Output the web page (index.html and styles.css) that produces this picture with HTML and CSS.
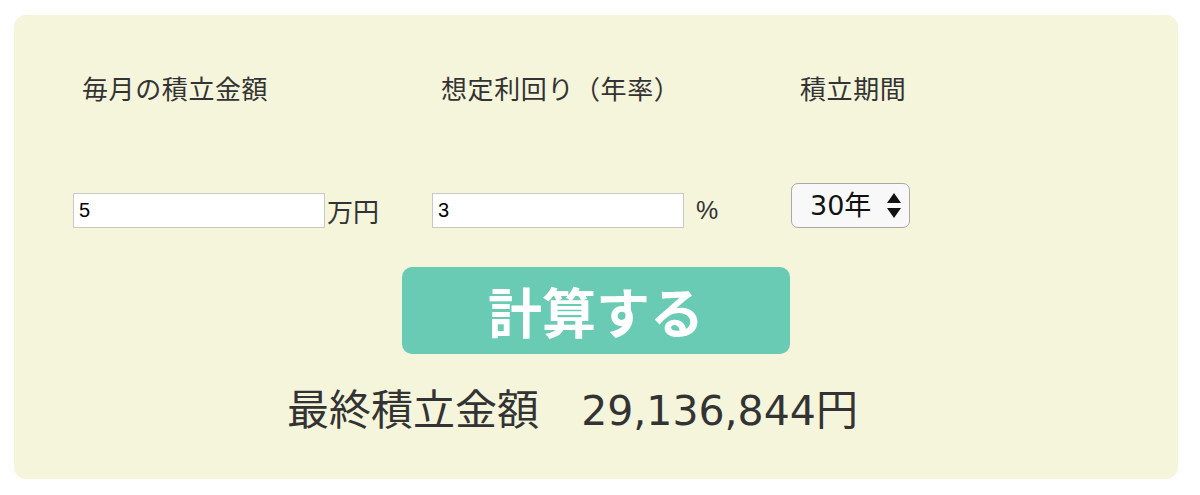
FILE: index.html
```html
<!DOCTYPE html>
<html lang="ja">
<head>
    <meta charset="UTF-8">
    <title>積立シミュレーション</title>
    <link rel="stylesheet" href="styles.css">
</head>
<body>
<div class="panel">
    <div class="fila etiquetas">
        <div class="col"><span class="etiqueta">毎月の積立金額</span></div>
        <div class="col"><span class="etiqueta">想定利回り（年率）</span></div>
        <div class="col"><span class="etiqueta">積立期間</span></div>
    </div>
    <div class="fila entradas">
        <div class="col">
            <input class="caja" type="text" value="5"><span class="unidad">万円</span>
        </div>
        <div class="col">
            <input class="caja" type="text" value="3"><span class="unidad porcentaje">%</span>
        </div>
        <div class="col">
            <div class="selector">
                <select class="periodo">
                    <option>30年</option>
                </select>
                <svg class="flechas" width="16" height="26" viewBox="0 0 16 26">
                    <path d="M8 0 L15 10 L1 10 Z" fill="#111"/>
                    <path d="M1 15 L15 15 L8 25 Z" fill="#111"/>
                </svg>
            </div>
        </div>
    </div>
    <div class="fila centro">
        <div class="boton">計算する</div>
    </div>
    <div id="resultado">最終積立金額　<span class="cifra">29,136,844</span>円</div>
</div>
</body>
</html>
```

FILE: styles.css
```css
body {
    margin: 0;
    font-family: "Noto Sans CJK JP", "Liberation Sans", sans-serif;
    color: #333;
}
.panel {
    width: 1164px;
    height: 464px;
    box-sizing: border-box;
    margin: 15px 0 0 14px;
    padding: 57px 0 0 59px;
    background-color: #f5f5dc;
    border-radius: 12px;
}
.fila {
    display: flex;
}
.col {
    width: 359px;
    display: flex;
    align-items: flex-end;
}
.etiqueta {
    padding-left: 9px;
    font-size: 26px;
    letter-spacing: 0.6px;
    line-height: 31px;
}
.entradas {
    margin-top: 80px;
    height: 45px;
}
.caja {
    width: 252px;
    height: 35px;
    box-sizing: border-box;
    margin: 0;
    padding: 0 5px;
    border: 1px solid #c8c8c8;
    background: #fff;
    font-family: "Liberation Sans", sans-serif;
    font-size: 20px;
    color: #000;
    outline: none;
}
.unidad {
    margin-left: 2px;
    font-size: 26px;
    line-height: 35px;
}
.porcentaje {
    margin-left: 12px;
    font-family: "Liberation Sans", sans-serif;
    font-size: 25px;
}
.selector {
    position: relative;
    width: 119px;
    height: 45px;
}
.periodo {
    appearance: none;
    -webkit-appearance: none;
    width: 119px;
    height: 45px;
    margin: 0;
    padding: 0 0 0 18px;
    border: 1px solid #a8a8a8;
    border-radius: 7px;
    background: #f8f8f8;
    font-family: "DejaVu Sans", "Noto Sans CJK JP", sans-serif;
    font-size: 27px;
    color: #111;
}
.flechas {
    position: absolute;
    right: 8px;
    top: 10px;
    pointer-events: none;
}
.centro {
    margin-top: 39px;
    margin-left: -59px;
    justify-content: center;
}
.boton {
    width: 388px;
    height: 87px;
    border-radius: 10px;
    background-color: #69cbb3;
    color: #fff;
    font-size: 54px;
    font-weight: bold;
    line-height: 87px;
    text-align: center;
    user-select: none;
    cursor: pointer;
}
#resultado {
    margin: 28px 0 0 -59px;
    padding-right: 47px;
    text-align: center;
    font-size: 42px;
    line-height: 50px;
}
.cifra {
    font-family: "DejaVu Sans", sans-serif;
    font-size: 41px;
}
```
